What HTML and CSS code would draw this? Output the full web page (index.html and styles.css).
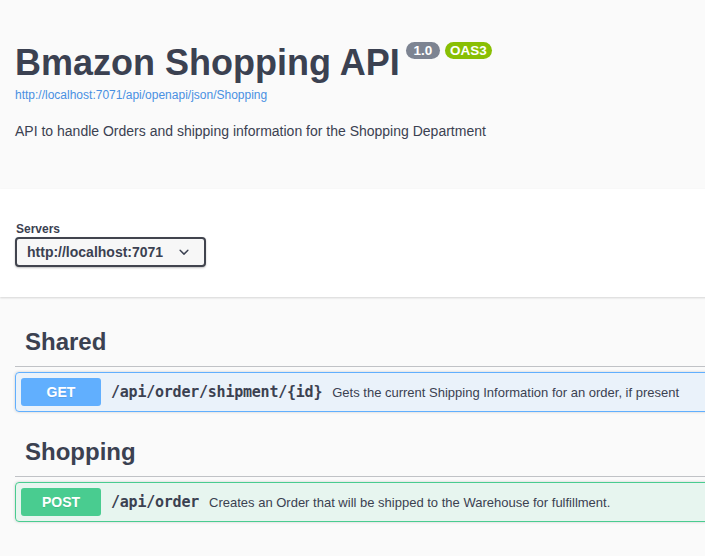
FILE: index.html
```html
<!DOCTYPE html>
<html lang="en">
<head>
<meta charset="utf-8">
<title>Bmazon Shopping API</title>
<link rel="stylesheet" href="styles.css">
</head>
<body>
<div class="page">
  <section class="info">
    <div class="title-row">
      <h2 class="title">Bmazon Shopping API</h2>
      <span class="badge badge-version">&nbsp;1.0&nbsp;</span>
      <span class="badge badge-oas">OAS3</span>
    </div>
    <a class="url" href="#">http://localhost:7071/api/openapi/json/Shopping</a>
    <p class="desc">API to handle Orders and shipping information for the Shopping Department</p>
  </section>

  <section class="schemes">
    <div class="servers-label">Servers</div>
    <div class="select">
      <span>http://localhost:7071</span>
      <svg class="chevron" width="20" height="20" viewBox="0 0 20 20"><path d="M13.418 7.859a.695.695 0 01.978 0 .68.68 0 010 .969l-3.908 3.830a.697.697 0 01-.979 0l-3.908-3.830a.68.68 0 010-.969.695.695 0 01.978 0L10 11l3.418-3.141z" fill="#3b4151"/></svg>
    </div>
  </section>

  <section class="ops">
    <div class="tag-section">
      <h3 class="tag">Shared</h3>
      <div class="opblock opblock-get">
        <div class="summary">
          <span class="method">GET</span>
          <span class="path">/api/order/shipment/{id}</span>
          <span class="sdesc">Gets the current Shipping Information for an order, if present</span>
        </div>
      </div>
    </div>
    <div class="tag-section">
      <h3 class="tag">Shopping</h3>
      <div class="opblock opblock-post">
        <div class="summary">
          <span class="method">POST</span>
          <span class="path">/api/order</span>
          <span class="sdesc">Creates an Order that will be shipped to the Warehouse for fulfillment.</span>
        </div>
      </div>
    </div>
  </section>
</div>
</body>
</html>
```
FILE: styles.css
```css
html, body {
  margin: 0;
  padding: 0;
  overflow: hidden;
  background: #fafafa;
}
body {
  font-family: "Liberation Sans", Arial, sans-serif;
  color: #3b4151;
}
.page {
  width: 1200px;
}
.info {
  padding: 43px 15px 0 15px;
  height: 146px;
  background: #fafafa;
}
.title-row {
  display: flex;
  align-items: flex-start;
}
.title {
  margin: 0;
  font-size: 36px;
  line-height: 40px;
  font-weight: 700;
  color: #3b4151;
}
.badge {
  display: inline-block;
  margin-top: -1px;
  font-size: 13.5px;
  line-height: 13px;
  font-weight: 700;
  color: #fff;
  padding: 2px 4px;
  border-radius: 57px;
  white-space: pre;
}
.badge-version {
  margin-left: 6px;
  background: #7d8492;
}
.badge-oas {
  margin-left: 5px;
  background: #89bf04;
  padding: 2px 5px;
}
.url {
  display: block;
  margin-top: 5px;
  font-size: 12px;
  line-height: 14px;
  color: #4990e2;
  text-decoration: none;
}
.desc {
  margin: 21px 0 0 0;
  font-size: 14px;
  line-height: 16px;
  color: #3b4151;
}
.schemes {
  background: #fff;
  box-shadow: 0 1px 2px 0 rgba(0,0,0,.15);
  padding: 33px 15px 30px 15px;
}
.servers-label {
  font-size: 12px;
  line-height: 14px;
  font-weight: 700;
  margin: 0 0 1px 1px;
}
.select {
  box-sizing: border-box;
  width: 191px;
  height: 30px;
  border: 2px solid #41444e;
  border-radius: 4px;
  background: #f7f7f7;
  box-shadow: 0 1px 2px 0 rgba(0,0,0,.25);
  display: flex;
  align-items: center;
  justify-content: space-between;
  padding: 0 10px 0 10px;
  font-size: 14px;
  font-weight: 700;
  color: #3b4151;
}
.chevron {
  display: block;
}
.ops {
  padding: 20px 0 0 15px;
}
.tag-section {
  display: flex;
  flex-direction: column;
}
.tag {
  margin: 0 0 5px 0;
  padding: 10px 20px 10px 10px;
  font-size: 24px;
  line-height: 29px;
  font-weight: 700;
  color: #3b4151;
  border-bottom: 1px solid rgba(59,65,81,.3);
}
.opblock {
  margin: 0 0 15px 0;
  border: 1px solid #000;
  border-radius: 4px;
  box-shadow: 0 0 3px rgba(0,0,0,.19);
}
.opblock-get {
  border-color: #61affe;
  background: rgba(97,175,254,.1);
}
.opblock-post {
  border-color: #49cc90;
  background: rgba(73,204,144,.1);
}
.summary {
  display: flex;
  align-items: center;
  padding: 5px;
}
.method {
  min-width: 80px;
  padding: 6px 0;
  font-size: 14px;
  line-height: 16px;
  font-weight: 700;
  text-align: center;
  color: #fff;
  border-radius: 3px;
  text-shadow: 0 1px 0 rgba(0,0,0,.1);
}
.opblock-get .method { background: #61affe; }
.opblock-post .method { background: #49cc90; }
.path {
  padding: 0 10px;
  font-family: "DejaVu Sans Mono", monospace;
  font-size: 15px;
  letter-spacing: -0.23px;
  font-weight: 700;
  color: #3b4151;
}
.sdesc {
  font-size: 13px;
  color: #3b4151;
}
```
